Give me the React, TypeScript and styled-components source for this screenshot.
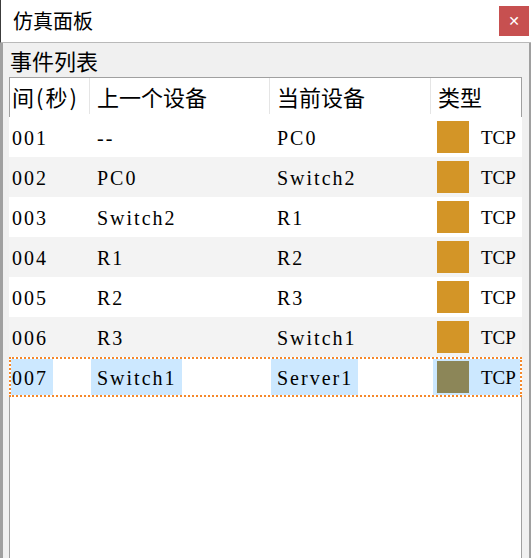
import styled, { createGlobalStyle } from 'styled-components';

const GlobalStyle = createGlobalStyle`
  html, body {
    margin: 0;
    padding: 0;
    background: #ffffff;
  }
  * {
    box-sizing: border-box;
  }
`;

const Window = styled.div`
  width: 531px;
  height: 558px;
  display: flex;
  flex-direction: column;
  background: #ffffff;
  font-family: 'Noto Sans CJK SC', 'Noto Sans', sans-serif;
  color: #000000;
  overflow: hidden;
`;

const TitleBar = styled.div`
  height: 43px;
  display: flex;
  align-items: center;
  justify-content: space-between;
  padding: 0 2px 0 12px;
  border-left: 1px solid #3c3c3c;
  border-bottom: 1px solid #b9b9b9;
`;

const Title = styled.span`
  font-size: 20px;
  line-height: 24px;
`;

const CloseButton = styled.div`
  width: 30px;
  height: 30px;
  background: #c75050;
  color: #ffffff;
  display: flex;
  align-items: center;
  justify-content: center;
  font-family: 'DejaVu Sans', sans-serif;
  font-weight: bold;
  font-size: 14px;
`;

const Body = styled.div`
  flex: 1;
  display: flex;
  flex-direction: column;
  background: #f0f0f0;
  border-left: 3px solid #a0a0a0;
  border-right: 2px solid #a0a0a0;
  padding: 0 7px 0 6px;
`;

const GroupLabel = styled.div`
  height: 34px;
  font-size: 22px;
  line-height: 34px;
  padding-left: 1px;
`;

const Table = styled.div`
  flex: 1;
  background: #ffffff;
  border: 1px solid #a0a0a0;
  border-bottom: none;
`;

const COLUMNS = '80px 180px 161px 1fr';

const HeaderRow = styled.div`
  display: grid;
  grid-template-columns: ${COLUMNS};
  height: 39px;
`;

const HeaderCell = styled.div<{ $first?: boolean }>`
  display: flex;
  align-items: center;
  padding-left: ${(p) => (p.$first ? 2 : 7)}px;
  font-size: 22px;
  letter-spacing: ${(p) => (p.$first ? 2 : 0)}px;
  white-space: nowrap;
  overflow: hidden;
  border-right: 1px solid #e5e5e5;
  margin: 0 0 3px;
  &:last-child {
    border-right: none;
  }
`;

const Row = styled.div<{ $striped: boolean; $selected: boolean }>`
  display: grid;
  grid-template-columns: ${COLUMNS};
  height: 40px;
  background: ${(p) => (p.$striped ? '#f3f3f3' : '#ffffff')};
  border: 2px dotted ${(p) => (p.$selected ? '#f5882a' : 'transparent')};
  margin: 0 -1px 0 -1px;
`;

const Cell = styled.div`
  display: flex;
  align-items: stretch;
  overflow: hidden;
`;

const CellText = styled.span<{ $first?: boolean; $selected: boolean }>`
  display: flex;
  align-items: center;
  padding: 2px 5px 0 ${(p) => (p.$first ? 1 : 6)}px;
  font-family: 'Liberation Serif', 'Noto Sans CJK SC', serif;
  font-size: 20px;
  letter-spacing: 2px;
  white-space: nowrap;
  background: ${(p) => (p.$selected ? '#cce8ff' : 'transparent')};
`;

const TypeCell = styled.div<{ $selected: boolean }>`
  flex: 1;
  display: flex;
  align-items: center;
  gap: 12px;
  padding-left: 4px;
  margin-left: 1px;
  background: ${(p) => (p.$selected ? '#cce8ff' : 'transparent')};
  font-family: 'Liberation Serif', serif;
  font-size: 19px;
`;

const TypeLabel = styled.span`
  padding-top: 2px;
`;

const Swatch = styled.div<{ $color: string }>`
  width: 32px;
  height: 32px;
  background: ${(p) => p.$color};
`;

type EventItem = {
  time: string;
  prev: string;
  current: string;
  type: string;
};

const events: EventItem[] = [
  { time: '001', prev: '--', current: 'PC0', type: 'TCP' },
  { time: '002', prev: 'PC0', current: 'Switch2', type: 'TCP' },
  { time: '003', prev: 'Switch2', current: 'R1', type: 'TCP' },
  { time: '004', prev: 'R1', current: 'R2', type: 'TCP' },
  { time: '005', prev: 'R2', current: 'R3', type: 'TCP' },
  { time: '006', prev: 'R3', current: 'Switch1', type: 'TCP' },
  { time: '007', prev: 'Switch1', current: 'Server1', type: 'TCP' },
];

const SELECTED_INDEX = 6;

function App() {
  return (
    <>
      <GlobalStyle />
      <Window>
        <TitleBar>
          <Title>仿真面板</Title>
          <CloseButton>✕</CloseButton>
        </TitleBar>
        <Body>
          <GroupLabel>事件列表</GroupLabel>
          <Table>
            <HeaderRow>
              <HeaderCell $first>间(秒)</HeaderCell>
              <HeaderCell>上一个设备</HeaderCell>
              <HeaderCell>当前设备</HeaderCell>
              <HeaderCell>类型</HeaderCell>
            </HeaderRow>
            {events.map((ev, i) => {
              const selected = i === SELECTED_INDEX;
              return (
                <Row key={ev.time} $striped={i % 2 === 1} $selected={selected}>
                  <Cell>
                    <CellText $first $selected={selected}>
                      {ev.time}
                    </CellText>
                  </Cell>
                  <Cell>
                    <CellText $selected={selected}>{ev.prev}</CellText>
                  </Cell>
                  <Cell>
                    <CellText $selected={selected}>{ev.current}</CellText>
                  </Cell>
                  <Cell>
                    <TypeCell $selected={selected}>
                      <Swatch $color={selected ? '#8c8658' : '#d39527'} />
                      <TypeLabel>{ev.type}</TypeLabel>
                    </TypeCell>
                  </Cell>
                </Row>
              );
            })}
          </Table>
        </Body>
      </Window>
    </>
  );
}

export default App;
